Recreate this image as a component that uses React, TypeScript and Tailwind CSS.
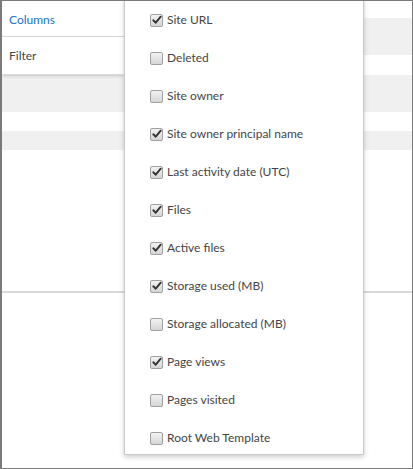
import React from 'react';

const columns: { label: string; checked: boolean }[] = [
  { label: 'Site URL', checked: true },
  { label: 'Deleted', checked: false },
  { label: 'Site owner', checked: false },
  { label: 'Site owner principal name', checked: true },
  { label: 'Last activity date (UTC)', checked: true },
  { label: 'Files', checked: true },
  { label: 'Active files', checked: true },
  { label: 'Storage used (MB)', checked: true },
  { label: 'Storage allocated (MB)', checked: false },
  { label: 'Page views', checked: true },
  { label: 'Pages visited', checked: false },
  { label: 'Root Web Template', checked: false },
];

function Checkbox({ checked }: { checked: boolean }) {
  return (
    <span className="relative flex h-[13px] w-[13px] shrink-0 items-center justify-center rounded-[2px] border border-[#a0a0a0] bg-gradient-to-b from-[#f2f2f2] to-[#d6d6d6]">
      {checked && (
        <svg width="10" height="10" viewBox="0 0 10 10" className="absolute left-[1px] top-[0px]">
          <path d="M1.3 5.3 L3.8 7.7 L8.7 1.7" fill="none" stroke="#333" strokeWidth="1.9" strokeLinecap="round" strokeLinejoin="round" />
        </svg>
      )}
    </span>
  );
}

export default function App() {
  return (
    <div className="relative h-[469px] w-[413px] overflow-hidden border border-[#7a7a7a] border-l-2 bg-white font-['Lato',sans-serif] text-[12px] text-[#444]">
      {/* table rows underneath */}
      <div className="flex flex-col">
        <div className="h-[17px]" />
        <div className="h-[37px] bg-[#f0f0f0]" />
        <div className="h-[20px]" />
        <div className="h-[37px] bg-[#f0f0f0]" />
        <div className="h-[19px]" />
        <div className="h-[19px] bg-[#f0f0f0]" />
        <div className="h-[143px] border-b-2 border-[#d9d9d9]" />
      </div>

      {/* side menu */}
      <div className="absolute left-0 top-0 w-[122px] bg-white shadow-[0_2px_3px_rgba(0,0,0,0.18)]">
        <div className="flex h-[36px] items-center border-b border-[#d4d4d4] pl-[7px] pt-[2px] text-[#1a73c8]">Columns</div>
        <div className="flex h-[37px] items-center pl-[7px] pt-[1px]">Filter</div>
      </div>

      {/* columns dropdown */}
      <div className="absolute left-[122px] top-[-2px] h-[456px] w-[240px] overflow-hidden border border-[#c8c8c8] bg-white shadow-[0_2px_5px_rgba(0,0,0,0.2)]">
        <div className="flex flex-col pt-[1px]">
          {columns.map((c) => (
            <div key={c.label} className="flex h-[38px] items-center gap-[4px] pl-[25px]">
              <Checkbox checked={c.checked} />
              <span className="leading-none">{c.label}</span>
            </div>
          ))}
        </div>
      </div>
    </div>
  );
}
